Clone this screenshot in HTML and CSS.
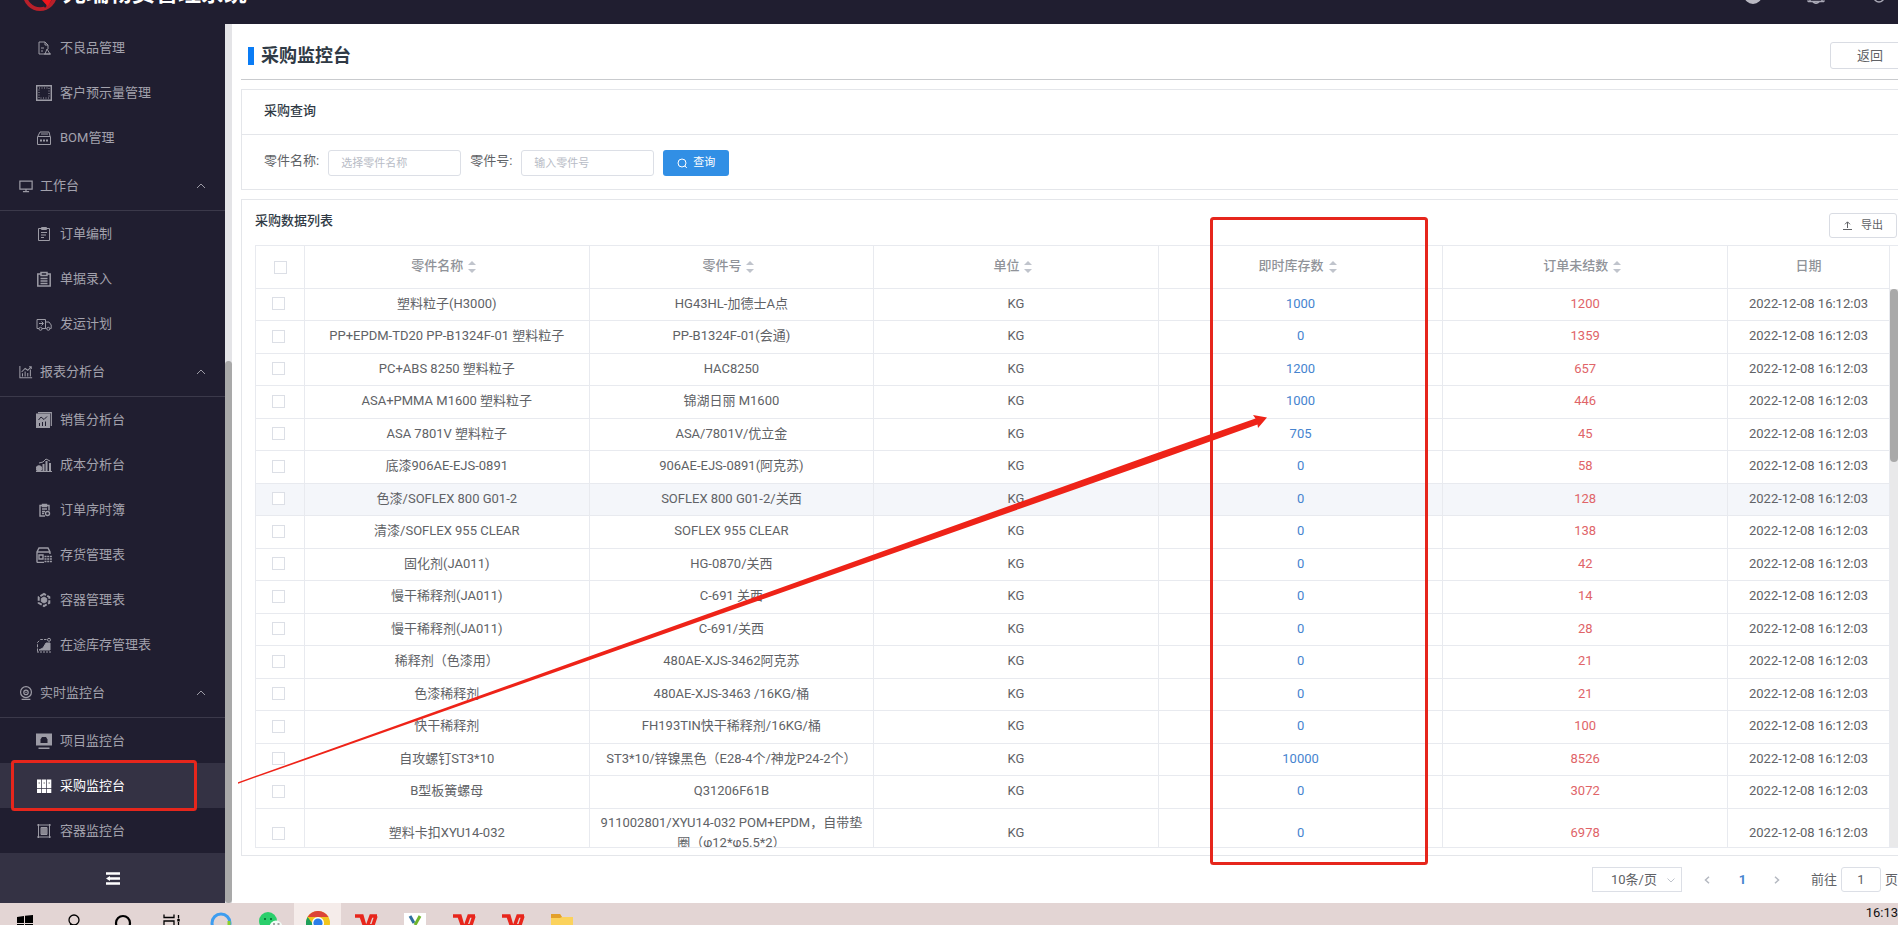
FILE: index.html
```html
<!DOCTYPE html>
<html lang="zh-CN">
<head>
<meta charset="utf-8">
<title>采购监控台</title>
<link rel="stylesheet" href="styles.css">
</head>
<body>
<header class="topbar">
  <svg class="logo" viewBox="0 0 36 36"><circle cx="18" cy="18" r="16" fill="none" stroke="#b8202a" stroke-width="4"/><path d="M16 20l10 11 6-9 1-16z" fill="#f0151c"/><path d="M13 16l11 16" stroke="#201e30" stroke-width="2"/></svg>
  <span class="brand">光瑞物资管理系统</span>
  <div class="top-icons">
    <svg width="18" height="20" viewBox="0 0 18 20"><circle cx="9" cy="11" r="9" fill="#b9b8c2"/></svg>
    <svg width="18" height="20" viewBox="0 0 18 20" fill="none" stroke="#a9a8b5" stroke-width="1.5"><path d="M.5 16.500l1 1h15l1-1M3 17V9a6 6 0 0 1 12 0v8M6 18q3 2.500 6 0"/></svg>
    <svg width="18" height="20" viewBox="0 0 18 20" fill="none" stroke="#a9a8b5" stroke-width="1.5"><circle cx="9" cy="5" r="4"/><circle cx="9" cy="13" r="5"/></svg>
  </div>
</header>

<div class="shell">
  <nav class="sidebar">
    <div class="menu">
      <a class="item" href="#"><svg viewBox="0 0 16 16"><path d="M9 14H3V2h6l3 3v4M9 2v3h3M5 8h3M5 11h2"/><path d="M11 9l-2 5h5zM8 14h7"/></svg>不良品管理</a>
      <a class="item" href="#"><svg viewBox="0 0 16 16"><path d="M.7.7h14.6v14.6H.7z" stroke-width="1.400"/><path d="M3 3h10v10H3z" stroke-dasharray="1 1.5"/></svg>客户预示量管理</a>
      <a class="item" href="#"><svg viewBox="0 0 16 16"><path d="M1.500 6.500h13v8h-13zM2 6l2-4h9l1 4M5 4h7"/><path d="M4 10.500h8" stroke-width="2" stroke-dasharray="2 1"/></svg>BOM管理</a>
      <a class="group" href="#"><svg viewBox="0 0 16 16"><path d="M1 2.500h14v9H1zM8 12v2.500M4.500 14.500h7" stroke-width="1.400"/></svg>工作台<svg class="chev" viewBox="0 0 10 6"><path d="M1 5l4-4 4 4"/></svg></a>
      <a class="item" href="#"><svg viewBox="0 0 16 16"><path d="M2.500 2.500h11v12h-11zM5.500 1.500h5v2h-5zM5 6.500h6M5 9h5M5 11.500h3"/></svg>订单编制</a>
      <a class="item" href="#"><svg viewBox="0 0 16 16" stroke-width="1.500"><path d="M5 3H1.800v12h12.400V3H11M5 1.500h6v3H5zM4.500 7.500h7M4.500 10h7M4.500 12.500h7"/></svg>单据录入</a>
      <a class="item" href="#"><svg viewBox="0 0 16 16"><path d="M3 12.500H1v-9h8.500v9H6M9.500 6h3.500l2.200 3v3.500h-1M9.500 12.500h1M3 7.500h4M5.500 5.500l2 2-2 2"/><circle cx="4.500" cy="12.800" r="1.500"/><circle cx="12.300" cy="12.800" r="1.500"/></svg>发运计划</a>
      <a class="group" href="#"><svg viewBox="0 0 16 16"><path d="M1 1v13.500h14M4 13V9.500M7 13V7.500M10 13V9M13 13V5M3 8l4-4 3 2 4-4M11.500 2H14v2.500" stroke-width="1.200"/></svg>报表分析台<svg class="chev" viewBox="0 0 10 6"><path d="M1 5l4-4 4 4"/></svg></a>
      <a class="item" href="#"><svg viewBox="0 0 16 16"><path d="M0 1.500h14V16H0z" fill="#9c9ba5" stroke="none"/><path d="M2 .7h13.300V14" stroke-width="1.200"/><path d="M2.500 8L5 5l3 2.500 3-3M3.500 14v-3M6.500 14v-4M9.500 14V9.500" stroke="#201e30"/></svg>销售分析台</a>
      <a class="item" href="#"><svg viewBox="0 0 16 16"><circle cx="3" cy="11.500" r="2.800" fill="#9c9ba5"/><path d="M7.500 14V7M10.500 14V4M14 14V6" stroke-width="2"/><path d="M3 6l4-1 3-3 4 2M0 14.500h16"/></svg>成本分析台</a>
      <a class="item" href="#"><svg viewBox="0 0 16 16" stroke-width="1.400"><path d="M9 14H4V3.500h9v5M6.500 2.500h4v2h-4zM6 7h5M6 9.500h3M6 11.500h2"/><circle cx="11.500" cy="11.500" r="2"/></svg>订单序时簿</a>
      <a class="item" href="#"><svg viewBox="0 0 16 16"><path d="M1 15.500V5l2-4h9l2 4v2M1 5h13M3 8h4v4H3zM1 15.500h7" stroke-width="1.400"/><path d="M8.500 9.500H16M8.500 12H16M8.500 14.500H16" stroke-width="1.600" stroke-dasharray="2 .7"/></svg>存货管理表</a>
      <a class="item" href="#"><svg viewBox="0 0 16 16"><path d="M8 2l5.300 3v6L8 14l-5.300-3V5z" stroke-width="2" stroke-dasharray="4.200 1.500" stroke-dashoffset="2"/><path d="M8 5l2.700 1.500v3L8 11 5.300 9.500v-3z" fill="#9c9ba5"/></svg>容器管理表</a>
      <a class="item" href="#"><svg viewBox="0 0 16 16"><path d="M1.500 14.500v-9l3-3h6" stroke-dasharray="3 1.200"/><path d="M3 13l4-2 3-5h4v7z" fill="#9c9ba5"/><circle cx="13" cy="2.800" r="1.500"/><path d="M1 15h14" stroke-dasharray="2 1"/></svg>在途库存管理表</a>
      <a class="group" href="#"><svg viewBox="0 0 16 16"><g stroke-width="1.400"><circle cx="8" cy="7" r="6.200"/><circle cx="8" cy="7.300" r="2.500"/><path d="M8 6.500v1.500M3 15.200h10"/></g></svg>实时监控台<svg class="chev" viewBox="0 0 10 6"><path d="M1 5l4-4 4 4"/></svg></a>
      <a class="item" href="#"><svg viewBox="0 0 16 16"><path d="M0 .5h16v12H0zM2.500 14.500h11v1.500h-11z" fill="#9c9ba5" stroke="none"/><path d="M4.500 10V6.500L6 4h4l1.500 2.500V10z" fill="#201e30" stroke="none"/></svg>项目监控台</a>
      <a class="item active" href="#"><svg viewBox="0 0 16 16"><path d="M1 1.500h4.300v8.700H1zM6 1.500h4.300v8.700H6zM11 1.500h4.300v8.700H11zM1 11h4.300v4H1zM6 11h4.300v4H6zM11 11h4.300v4H11z" fill="#fff" stroke="none"/><path d="M2.500 5h1.500M7.500 5H9M12.500 5H14" stroke="#777"/></svg>采购监控台</a>
      <a class="item" href="#"><svg viewBox="0 0 16 16"><path d="M1 2h14M1 14h14M2.500 1v14M13.500 1v14"/><path d="M5 4.500h6v7H5z" fill="#77757f"/><path d="M7 4.500v7M9 4.500v7"/></svg>容器监控台</a>
    </div>
    <button class="collapse" type="button" aria-label="收起菜单"><svg width="14" height="13" viewBox="0 0 14 13"><path d="M0 1.500h14M4 6.500h10M0 11.500h14" stroke="#fff" stroke-width="2.600"/><path d="M0 6.500L4 4v5z" fill="#fff"/></svg></button>
  </nav>
  <div class="side-scroll"><div class="side-thumb"></div></div>

  <main class="content">
    <div class="page-head">
      <h1>采购监控台</h1>
      <button class="btn back" type="button">返回</button>
    </div>
    <section class="card">
      <h2 class="query-title">采购查询</h2>
      <form class="query">
        <label for="pname">零件名称:</label>
        <input id="pname" type="text" placeholder="选择零件名称">
        <label for="pno">零件号:</label>
        <input id="pno" type="text" placeholder="输入零件号">
        <button class="search" type="button"><svg width="11" height="11" viewBox="0 0 11 11" fill="none" stroke="#fff"><circle cx="5" cy="5" r="4"/><path d="M7.800 7.800l2 2.200"/></svg>查询</button>
      </form>
    </section>
    <section class="card list">
      <div class="list-head">
        <h2>采购数据列表</h2>
        <button class="btn export" type="button"><svg width="9" height="9" viewBox="0 0 9 9" fill="none" stroke="#606266"><path d="M0 8.500h9M4.500 7V1M2 3.300L4.500.8 7 3.300"/></svg>导出</button>
      </div>
      <div class="table-box">
        <div class="table-clip">
        <table>
          <colgroup><col class="c-check"><col><col><col><col><col><col class="c-date"></colgroup>
          <thead><tr>
            <th><input type="checkbox" aria-label="全选"></th>
            <th>零件名称<i class="sort"></i></th><th>零件号<i class="sort"></i></th><th>单位<i class="sort"></i></th><th>即时库存数<i class="sort"></i></th><th>订单未结数<i class="sort"></i></th><th>日期</th>
          </tr></thead>
          <tbody>
            <tr><td><input type="checkbox" aria-label="选择"></td><td>塑料粒子(H3000)</td><td>HG43HL-加德士A点</td><td>KG</td><td class="b">1000</td><td class="r">1200</td><td>2022-12-08 16:12:03</td></tr>
            <tr><td><input type="checkbox" aria-label="选择"></td><td>PP+EPDM-TD20 PP-B1324F-01 塑料粒子</td><td>PP-B1324F-01(会通)</td><td>KG</td><td class="b">0</td><td class="r">1359</td><td>2022-12-08 16:12:03</td></tr>
            <tr><td><input type="checkbox" aria-label="选择"></td><td>PC+ABS 8250 塑料粒子</td><td>HAC8250</td><td>KG</td><td class="b">1200</td><td class="r">657</td><td>2022-12-08 16:12:03</td></tr>
            <tr><td><input type="checkbox" aria-label="选择"></td><td>ASA+PMMA M1600 塑料粒子</td><td>锦湖日丽 M1600</td><td>KG</td><td class="b">1000</td><td class="r">446</td><td>2022-12-08 16:12:03</td></tr>
            <tr><td><input type="checkbox" aria-label="选择"></td><td>ASA 7801V 塑料粒子</td><td>ASA/7801V/优立金</td><td>KG</td><td class="b">705</td><td class="r">45</td><td>2022-12-08 16:12:03</td></tr>
            <tr><td><input type="checkbox" aria-label="选择"></td><td>底漆906AE-EJS-0891</td><td>906AE-EJS-0891(阿克苏)</td><td>KG</td><td class="b">0</td><td class="r">58</td><td>2022-12-08 16:12:03</td></tr>
            <tr class="hover"><td><input type="checkbox" aria-label="选择"></td><td>色漆/SOFLEX 800 G01-2</td><td>SOFLEX 800 G01-2/关西</td><td>KG</td><td class="b">0</td><td class="r">128</td><td>2022-12-08 16:12:03</td></tr>
            <tr><td><input type="checkbox" aria-label="选择"></td><td>清漆/SOFLEX 955 CLEAR</td><td>SOFLEX 955 CLEAR</td><td>KG</td><td class="b">0</td><td class="r">138</td><td>2022-12-08 16:12:03</td></tr>
            <tr><td><input type="checkbox" aria-label="选择"></td><td>固化剂(JA011)</td><td>HG-0870/关西</td><td>KG</td><td class="b">0</td><td class="r">42</td><td>2022-12-08 16:12:03</td></tr>
            <tr><td><input type="checkbox" aria-label="选择"></td><td>慢干稀释剂(JA011)</td><td>C-691 关西</td><td>KG</td><td class="b">0</td><td class="r">14</td><td>2022-12-08 16:12:03</td></tr>
            <tr><td><input type="checkbox" aria-label="选择"></td><td>慢干稀释剂(JA011)</td><td>C-691/关西</td><td>KG</td><td class="b">0</td><td class="r">28</td><td>2022-12-08 16:12:03</td></tr>
            <tr><td><input type="checkbox" aria-label="选择"></td><td>稀释剂（色漆用）</td><td>480AE-XJS-3462阿克苏</td><td>KG</td><td class="b">0</td><td class="r">21</td><td>2022-12-08 16:12:03</td></tr>
            <tr><td><input type="checkbox" aria-label="选择"></td><td>色漆稀释剂</td><td>480AE-XJS-3463 /16KG/桶</td><td>KG</td><td class="b">0</td><td class="r">21</td><td>2022-12-08 16:12:03</td></tr>
            <tr><td><input type="checkbox" aria-label="选择"></td><td>快干稀释剂</td><td>FH193TIN快干稀释剂/16KG/桶</td><td>KG</td><td class="b">0</td><td class="r">100</td><td>2022-12-08 16:12:03</td></tr>
            <tr><td><input type="checkbox" aria-label="选择"></td><td>自攻螺钉ST3*10</td><td>ST3*10/锌镍黑色（E28-4个/神龙P24-2个）</td><td>KG</td><td class="b">10000</td><td class="r">8526</td><td>2022-12-08 16:12:03</td></tr>
            <tr><td><input type="checkbox" aria-label="选择"></td><td>B型板簧螺母</td><td>Q31206F61B</td><td>KG</td><td class="b">0</td><td class="r">3072</td><td>2022-12-08 16:12:03</td></tr>
            <tr><td><input type="checkbox" aria-label="选择"></td><td>塑料卡扣XYU14-032</td><td>911002801/XYU14-032 POM+EPDM，自带垫圈（φ12*φ5.5*2）</td><td>KG</td><td class="b">0</td><td class="r">6978</td><td>2022-12-08 16:12:03</td></tr>
          </tbody>
        </table>
        </div>
        <div class="table-scroll"><div class="table-thumb"></div></div>
      </div>
    </section>
    <div class="pager">
      <span class="size-wrap"><select class="size" aria-label="每页条数"><option>10条/页</option></select><svg width="8" height="5" viewBox="0 0 8 5" fill="none" stroke="#c0c4cc"><path d="M.5.5L4 4 7.500.5"/></svg></span>
      <button class="nav" type="button" aria-label="上一页"><svg width="6" height="8" viewBox="0 0 6 8"><path d="M5 .8L1.500 4 5 7.200"/></svg></button>
      <button class="nav page" type="button">1</button>
      <button class="nav" type="button" aria-label="下一页"><svg width="6" height="8" viewBox="0 0 6 8"><path d="M1 .8L4.500 4 1 7.200"/></svg></button>
      <label for="jump">前往</label><input id="jump" type="text" value="1"><span>页</span>
    </div>
  </main>
</div>

<footer class="taskbar">
  <div class="app"><svg viewBox="0 0 24 24"><path d="M4 6l7-1v7H4zM12 4.800L20 4v8h-8zM4 13h7v7l-7-1zM12 13h8v8l-8-1z" fill="#000"/></svg></div>
  <div class="app"><svg viewBox="0 0 24 24" fill="none" stroke="#000" stroke-width="1.300"><circle cx="12" cy="9" r="5"/><path d="M9 13l-4 7"/></svg></div>
  <div class="app"><svg viewBox="0 0 24 24" fill="none" stroke="#000" stroke-width="2.200"><circle cx="12" cy="12" r="7"/></svg></div>
  <div class="app"><svg viewBox="0 0 24 24" fill="none" stroke="#000" stroke-width="1.300"><path d="M4 3.500v3h10v-3M4 18v-8h10v8M18.500 4v3.500M18.500 11v8" /><path d="M18.500 8v2.500" stroke-width="2.500"/></svg></div>
  <div class="app"><svg viewBox="0 0 24 24" fill="none" stroke-width="3"><circle cx="12" cy="12" r="9" stroke="#3d9df0"/><path d="M20 10v5" stroke="#8bd02c"/></svg></div>
  <div class="app"><svg viewBox="0 0 24 24"><circle cx="10" cy="10" r="9" fill="#2bcf6c"/><circle cx="18" cy="16" r="6.500" fill="#f2faf5"/><path d="M6 8h2M12 8h2" stroke="#0b7a3a" stroke-width="2"/><path d="M15 13h2M19.500 13h2" stroke="#888" stroke-width="1.500"/></svg></div>
  <div class="app current"><svg viewBox="0 0 24 24"><circle cx="12" cy="12" r="12" fill="#f2c51d"/><path d="M1.600 6A12 12 0 0 1 22.400 6z" fill="#dc4437"/><path d="M12 24A12 12 0 0 1 1.600 6l6 8z" fill="#1fa05a"/><circle cx="12" cy="12" r="6" fill="#fff"/><circle cx="12" cy="12" r="4.600" fill="#2b7de9"/></svg></div>
  <div class="app"><svg viewBox="0 0 24 24" fill="none" stroke="#e8261c" stroke-width="3.500"><path d="M1 5h7l4 14M7 5l5 14 5-14h6M14 12l4 5 4-12"/></svg></div>
  <div class="app"><svg viewBox="0 0 24 24"><rect x="1" y="2" width="22" height="20" fill="#fff"/><path d="M7 5l4 7" stroke="#2e6f9e" stroke-width="3"/><path d="M17 5l-5 9" stroke="#6fb52c" stroke-width="3"/></svg></div>
  <div class="app"><svg viewBox="0 0 24 24" fill="none" stroke="#e8261c" stroke-width="3.500"><path d="M1 5h7l4 14M7 5l5 14 5-14h6M14 12l4 5 4-12"/></svg></div>
  <div class="app"><svg viewBox="0 0 24 24" fill="none" stroke="#e8261c" stroke-width="3.500"><path d="M1 5h7l4 14M7 5l5 14 5-14h6M14 12l4 5 4-12"/></svg></div>
  <div class="app"><svg viewBox="0 0 24 24"><path d="M1 3h9l2 3h11v16H1z" fill="#fbd25c"/><path d="M1 3h9l2 3-2 1H1z" fill="#e3a02b"/><path d="M4 15h16v6H4z" fill="#3e8fd0"/></svg></div>
  <time class="clock">16:13</time>
</footer>

<svg class="marks" width="1440" height="880" viewBox="0 0 1440 880" aria-hidden="true">
  <g fill="none" stroke="#e6261c" stroke-width="3"><rect x="12.500" y="761.500" width="183" height="48" rx="2"/><rect x="1211.500" y="218.500" width="215" height="645" rx="2"/></g>
  <path d="M238 782.300L1150 455.500 1255.500 418.500 1253 415 1267 417.500 1258 428 1257.500 424.500 1150 463 238 783.700z" fill="#ee2318"/>
</svg>
</body>
</html>
```
FILE: styles.css
```css
* { box-sizing: border-box; }
body {
  margin: 0;
  height: 100vh;
  display: flex;
  flex-direction: column;
  overflow: hidden;
  background: #fff;
  color: #606266;
  font: 13px/20px Roboto, "Noto Sans CJK SC", sans-serif;
}
button, input, select { font: inherit; color: inherit; }
h1, h2 { margin: 0; font-size: 13px; font-weight: 500; color: #303a45; }

.topbar {
  flex: none;
  display: flex;
  align-items: center;
  height: 60px;
  margin-top: -36px;
  padding: 0 10px 0 23px;
  background: #201e30;
}
.logo { width: 34px; height: 34px; }
.brand { margin-left: 6px; font-size: 23px; font-weight: 700; color: #fff; }
.top-icons { display: flex; gap: 45px; margin-left: auto; }

.shell { flex: 1; display: flex; min-height: 0; }
.sidebar {
  flex: none;
  display: flex;
  flex-direction: column;
  width: 225px;
  background: #201e30;
}
.menu { flex: 1; padding-top: 1px; }
.item, .group {
  display: flex;
  align-items: center;
  color: #a3a2ad;
  text-decoration: none;
}
.item { height: 45px; gap: 8px; padding-left: 36px; }
.group {
  height: 51px;
  gap: 7px;
  padding: 2px 19px 0;
  border-bottom: 1px solid #3b394a;
}
.menu svg {
  flex: none;
  width: 16px;
  height: 16px;
  fill: none;
  stroke: #9c9ba5;
}
.group svg { width: 14px; }
.menu .chev { width: 10px; height: 6px; margin-left: auto; }
.active { background: #343244; color: #fff; }
.collapse {
  display: flex;
  align-items: center;
  justify-content: center;
  height: 51px;
  border: 0;
  background: #343244;
}
.side-scroll { flex: none; width: 7px; padding-top: 337px; background: #e4e4e7; }
.side-thumb { height: 100%; border-radius: 4px; background: #a9a9a9; }

.content {
  flex: 1;
  display: flex;
  flex-direction: column;
  min-width: 0;
  padding-left: 9px;
  overflow: hidden;
}
.page-head {
  flex: none;
  display: flex;
  align-items: center;
  justify-content: space-between;
  height: 56px;
  margin-right: -12px;
  padding: 8px 0 0 7px;
  border-bottom: 1px solid #c9cbce;
}
.page-head h1 {
  padding-left: 7px;
  border-left: 6px solid #0a7cf5;
  font-size: 18px;
  line-height: 18px;
  font-weight: 700;
}
.btn {
  display: flex;
  align-items: center;
  justify-content: center;
  border: 1px solid #d9dce3;
  border-radius: 3px;
  background: #fff;
}
.back { width: 80px; height: 27px; }
.card {
  flex: none;
  margin-top: 9px;
  border: 1px solid #e4e6ea;
  border-right: 0;
}
.query-title { padding: 11px 22px 13px; border-bottom: 1px solid #e4e6ea; }
.query { display: flex; gap: 9px; padding: 15px 22px 13px; }
.query label { line-height: 22px; }
.query input {
  width: 133px;
  height: 26px;
  padding: 0 12px;
  border: 1px solid #dcdfe6;
  border-radius: 3px;
  font-size: 11px;
}
.query input::placeholder { color: #b8bcc6; }
.search {
  display: flex;
  align-items: center;
  justify-content: center;
  gap: 5px;
  width: 66px;
  height: 26px;
  padding: 0;
  border: 0;
  border-radius: 3px;
  background: #318fe5;
  color: #fff;
  font-size: 11px;
}
.list {
  flex: 1;
  display: flex;
  flex-direction: column;
  min-height: 0;
  padding: 13px 0 7px 13px;
}
.list-head {
  display: flex;
  justify-content: space-between;
  align-items: flex-start;
  height: 32px;
  padding-right: 1px;
}
.export { gap: 9px; width: 68px; height: 25px; padding: 0; font-size: 11px; }
.list-head h2 { line-height: 16px; }
.table-box {
  flex: 1;
  display: flex;
  min-height: 0;
  overflow: hidden;
  border: 1px solid #e8eaef;
  border-right: 0;
}
.table-clip { flex: 1; min-width: 0; }
table {
  width: 100%;
  table-layout: fixed;
  border-collapse: separate;
  border-spacing: 0;
  text-align: center;
}
.c-check { width: 49px; }
.c-date { width: 162px; }
th, td {
  padding: 4px 9px 6px;
  border-right: 1px solid #e8eaef;
  border-bottom: 1px solid #e8eaef;
}
th { height: 43px; color: #909399; font-weight: 500; }
td { height: 32px; }
tr:nth-child(even) td { height: 33px; }
th:first-child { padding: 0; }
td:first-child { padding: 0 3px 2px 0; }
.hover { background: #f4f6fa; }
.b { color: #4684cf; }
.r { color: #e06468; }
input[type="checkbox"] {
  appearance: none;
  display: block;
  width: 13px;
  height: 13px;
  margin: 0 auto;
  border: 1px solid #dcdfe6;
  background: #fff;
}
.sort {
  display: inline-grid;
  gap: 4px;
  margin: 0 6px 0 5px;
  vertical-align: middle;
}
.sort::before, .sort::after { content: ""; border: 4px solid transparent; }
.sort::before { border-top: 0; border-bottom-color: #c0c4cc; }
.sort::after { border-bottom: 0; border-top-color: #c0c4cc; }
.table-scroll { width: 8px; margin-top: 43px; background: #e9e9ea; }
.table-thumb { height: 31%; border-radius: 4px; background: #a9a9a9; }

.pager {
  flex: none;
  display: flex;
  align-items: center;
  justify-content: flex-end;
  height: 47px;
}
.size-wrap { position: relative; margin-right: 8px; }
.size-wrap svg { position: absolute; right: 7px; top: 11px; }
.size {
  appearance: none;
  display: block;
  width: 90px;
  height: 25px;
  padding: 0 0 0 18px;
  border: 1px solid #dcdfe6;
  background: #fff;
}
.nav { width: 35px; padding: 0; border: 0; background: none; }
.nav path { fill: none; stroke: #b4b8c0; stroke-width: 1.5; }
.page { color: #4684cf; font-weight: 700; }
.pager label { margin-left: 16px; }
.pager input {
  width: 40px;
  height: 25px;
  margin: 0 4px;
  border: 1px solid #dcdfe6;
  border-radius: 3px;
  text-align: center;
}

.taskbar {
  flex: none;
  display: flex;
  height: 40px;
  margin-bottom: -18px;
  background: #e3d5d4;
}
.app {
  display: flex;
  align-items: center;
  justify-content: center;
  width: 49px;
}
.app svg { width: 24px; height: 24px; }
.app.current { width: 47px; background: #f5ecea; }
.clock { margin-left: auto; color: #111; }

.marks { position: absolute; left: 0; top: 0; pointer-events: none; }
```
